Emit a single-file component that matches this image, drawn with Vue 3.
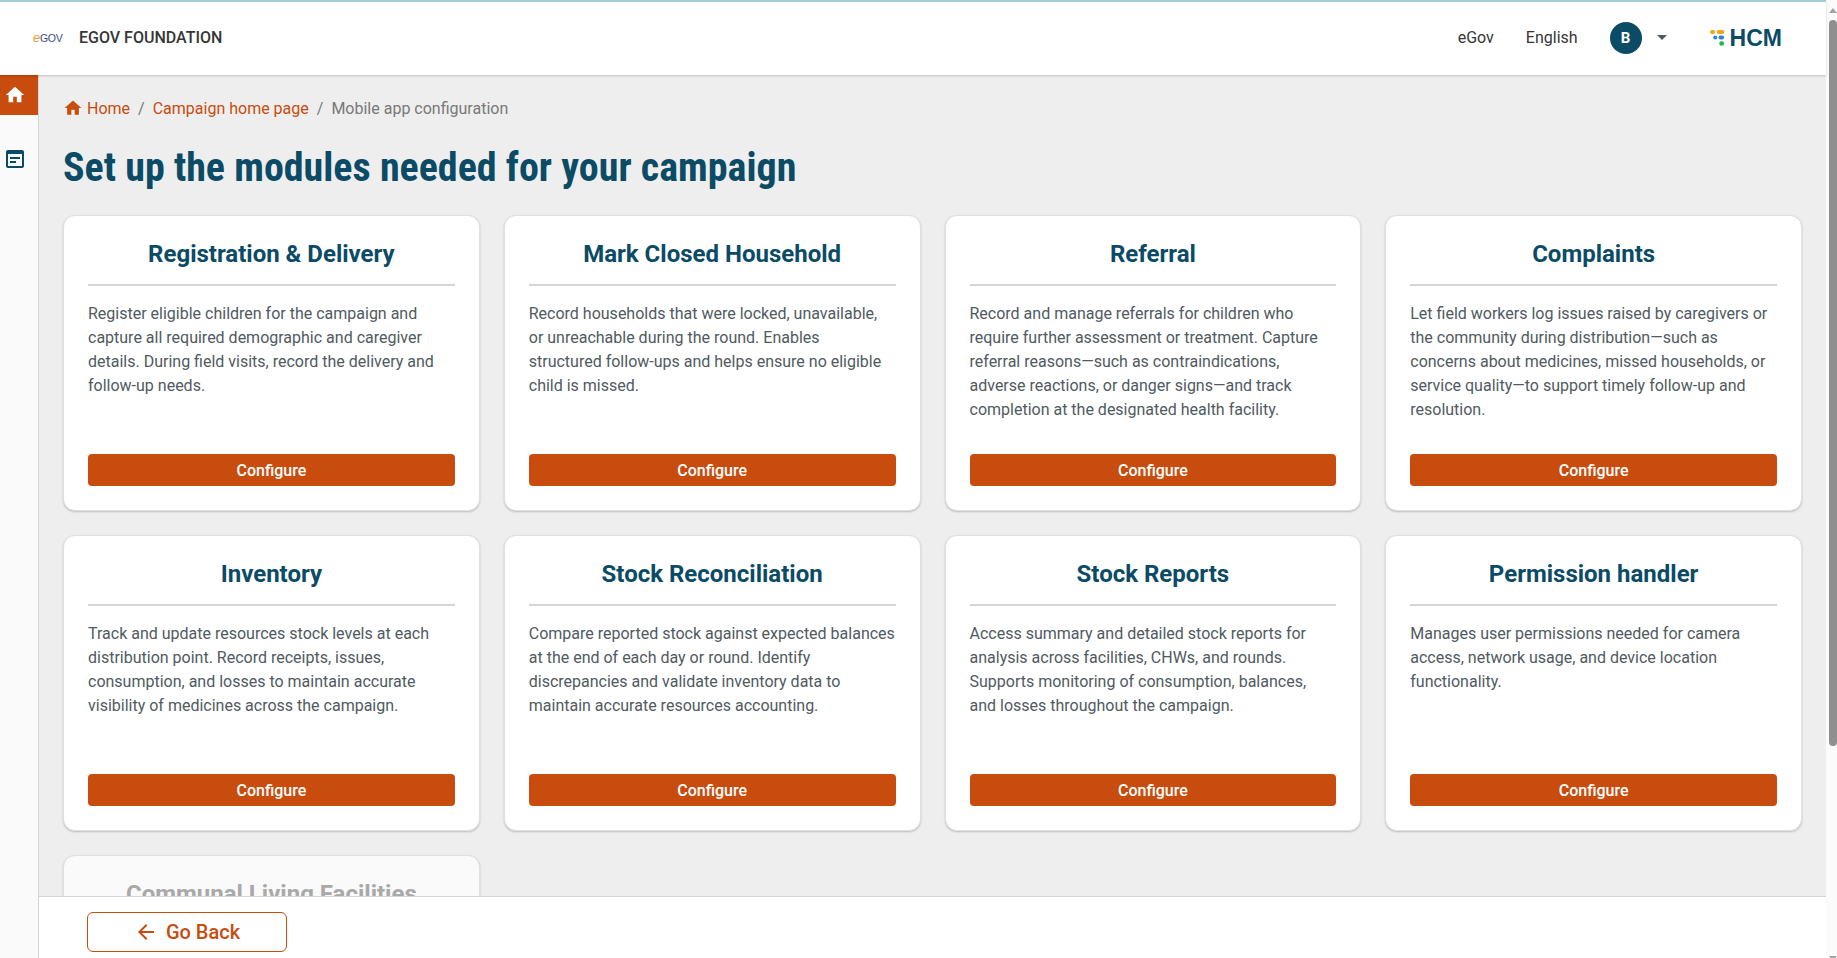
<script setup>
const cards = [
  { title: 'Registration & Delivery', text: 'Register eligible children for the campaign and capture all required demographic and caregiver details. During field visits, record the delivery and follow-up needs.' },
  { title: 'Mark Closed Household', text: 'Record households that were locked, unavailable, or unreachable during the round. Enables structured follow-ups and helps ensure no eligible child is missed.' },
  { title: 'Referral', text: 'Record and manage referrals for children who require further assessment or treatment. Capture referral reasons—such as contraindications, adverse reactions, or danger signs—and track completion at the designated health facility.' },
  { title: 'Complaints', text: 'Let field workers log issues raised by caregivers or the community during distribution—such as concerns about medicines, missed households, or service quality—to support timely follow-up and resolution.' },
  { title: 'Inventory', text: 'Track and update resources stock levels at each distribution point. Record receipts, issues, consumption, and losses to maintain accurate visibility of medicines across the campaign.' },
  { title: 'Stock Reconciliation', text: 'Compare reported stock against expected balances at the end of each day or round. Identify discrepancies and validate inventory data to maintain accurate resources accounting.' },
  { title: 'Stock Reports', text: 'Access summary and detailed stock reports for analysis across facilities, CHWs, and rounds. Supports monitoring of consumption, balances, and losses throughout the campaign.' },
  { title: 'Permission handler', text: 'Manages user permissions needed for camera access, network usage, and device location functionality.' },
  { title: 'Communal Living Facilities', faded: true }
]
</script>

<template>
  <div class="page">
    <div class="column">
      <header class="topbar">
        <div class="brand">
          <span class="egov-logo"><i>e</i>GOV</span>
          <span class="org">EGOV FOUNDATION</span>
        </div>
        <div class="actions">
          <span class="tenant">eGov</span>
          <span class="lang">English</span>
          <span class="avatar">B</span>
          <span class="caret"></span>
          <span class="hcm">
            <svg width="15" height="16" viewBox="0 0 15 16">
              <rect x="0" y="0" width="5" height="4" rx="2" fill="#f7a21b" />
              <rect x="6.7" y="0" width="7.6" height="4" rx="2" fill="#f7a21b" />
              <circle cx="5.2" cy="7.5" r="2" fill="#2f86d0" />
              <rect x="8.5" y="5.5" width="5.6" height="4" rx="2" fill="#2f86d0" />
              <rect x="9.3" y="11.3" width="4.8" height="4.4" rx="2.2" fill="#1fb84f" />
            </svg>
            <b>HCM</b>
          </span>
        </div>
      </header>
      <div class="body">
        <aside class="sidebar">
          <div class="side-item active">
            <svg width="22" height="22" viewBox="0 0 24 24" fill="#fff"><path d="M10 20v-6h4v6h5v-8h3L12 3 2 12h3v8z" /></svg>
          </div>
          <div class="side-item">
            <svg width="24" height="24" viewBox="0 0 24 24" fill="#0b4b66"><path d="M19 3H5c-1.1 0-2 .9-2 2v14c0 1.1.9 2 2 2h14c1.1 0 2-.9 2-2V5c0-1.1-.9-2-2-2zm0 16H5V7h14v12zm-2-7H7v-2h10v2zm-4 4H7v-2h6v2z" /></svg>
          </div>
        </aside>
        <main class="main">
          <nav class="crumbs">
            <svg width="20" height="20" viewBox="0 0 24 24" fill="#c84c0e"><path d="M10 20v-6h4v6h5v-8h3L12 3 2 12h3v8z" /></svg>
            <a class="home">Home</a>
            <span class="sep">/</span>
            <a>Campaign home page</a>
            <span class="sep">/</span>
            <span class="current">Mobile app configuration</span>
          </nav>
          <h1>Set up the modules needed for your campaign</h1>
          <section class="grid">
            <article v-for="c in cards" :key="c.title" class="card" :class="{ faded: c.faded }">
              <h2>{{ c.title }}</h2>
              <template v-if="c.text">
                <p>{{ c.text }}</p>
                <button class="configure">Configure</button>
              </template>
            </article>
          </section>
          <footer class="footer">
            <button class="back">
              <svg width="24" height="24" viewBox="0 0 24 24" fill="#c84c0e"><path d="M20 11H7.83l5.59-5.59L12 4l-8 8 8 8 1.41-1.41L7.83 13H20v-2z" /></svg>
              Go Back
            </button>
          </footer>
        </main>
      </div>
    </div>
    <div class="scrollbar">
      <span class="arrow up"></span>
      <span class="thumb"></span>
      <span class="arrow down"></span>
    </div>
  </div>
</template>

<style>
html, body { margin: 0; overflow: hidden; }
</style>

<style scoped>
.page {
  display: flex;
  height: 958px;
  overflow: hidden;
  font-family: Roboto, "Liberation Sans", sans-serif;
  background: #eee;
}
.column { flex: 1; min-width: 0; display: flex; flex-direction: column; }
.topbar {
  flex: none;
  height: 71px;
  background: #fff;
  border-top: 2px solid #a3ccd6;
  box-shadow: 0 1px 2px rgba(0, 0, 0, .2);
  display: flex;
  align-items: center;
  justify-content: space-between;
  padding: 0 44px 2px 33px;
  position: relative;
  z-index: 3;
}
.brand { display: flex; align-items: center; gap: 18px; }
.egov-logo { width: 28px; font-size: 10.5px; font-family: "Liberation Sans", sans-serif; color: #3b4a8a; letter-spacing: -.3px; white-space: nowrap; }
.egov-logo i { color: #f39a2c; font-size: 13px; font-style: italic; }
.org { font-weight: 500; font-size: 16px; color: #363636; }
.actions { display: flex; align-items: center; }
.tenant, .lang { font-size: 16px; color: #363636; }
.lang { margin-left: 32px; }
.avatar {
  width: 32px; height: 32px; border-radius: 50%;
  background: #0b4b66; color: #fff; font-weight: 700; font-size: 15px;
  display: flex; align-items: center; justify-content: center;
  margin-left: 32px;
}
.caret {
  width: 0; height: 0;
  border-left: 5px solid transparent; border-right: 5px solid transparent; border-top: 5px solid #505a5f;
  margin-left: 15px;
}
.hcm { display: flex; align-items: center; gap: 5px; margin-left: 43px; }
.hcm b { color: #0b4b66; font-size: 23px; line-height: 24px; font-family: "Liberation Sans", sans-serif; }
.body { flex: 1; min-height: 0; display: flex; }
.sidebar {
  width: 38px; flex: none;
  background: #fafafa;
  border-right: 1px solid #d6d5d4;
}
.side-item { height: 40px; display: flex; align-items: center; padding-left: 3px; margin-bottom: 24px; }
.side-item.active { background: #c84c0e; padding-left: 4px; }
.main { flex: 1; min-width: 0; position: relative; overflow: hidden; padding: 0 24px; }
.crumbs { display: flex; align-items: center; height: 24px; margin-top: 21px; font-size: 16px; }
.crumbs a { color: #c84c0e; }
.crumbs a.home { margin-left: 4px; }
.crumbs .sep { color: #787878; margin: 0 8px; }
.crumbs .current { color: #787878; }
h1 {
  margin: 24px 0 0;
  font-size: 40px;
  line-height: 48px;
  font-weight: 700;
  font-stretch: condensed;
  color: #0b4b66;
}
.grid {
  display: grid;
  grid-template-columns: repeat(4, 1fr);
  gap: 24px;
  margin-top: 23px;
}
.card {
  height: 296px;
  box-sizing: border-box;
  background: #fff;
  border: 1px solid #e0e0e0;
  border-radius: 12px;
  box-shadow: 0 1px 2px rgba(0, 0, 0, .2);
  padding: 24px;
  display: flex;
  flex-direction: column;
}
.card h2 {
  margin: 0;
  font-size: 24px;
  line-height: 28px;
  font-weight: 700;
  color: #0b4b66;
  text-align: center;
  padding-bottom: 16px;
  border-bottom: 2px solid #d6d5d4;
}
.card p {
  margin: 16px 0 0;
  flex: 1;
  font-size: 16px;
  line-height: 24px;
  color: #505a5f;
}
.configure {
  height: 32px;
  border: 0;
  border-radius: 4px;
  background: #c84c0e;
  color: #fff;
  font: 500 16px Roboto, sans-serif;
}
.faded { background: #fafafa; }
.faded h2 { color: #a9a9a9; }
.footer {
  position: absolute;
  left: 0; right: 0; bottom: 0;
  height: 62px;
  box-sizing: border-box;
  background: #fff;
  border-top: 1px solid #d6d5d4;
  padding: 15px 48px;
}
.back {
  width: 200px; height: 40px;
  box-sizing: border-box;
  background: #fff;
  border: 1px solid #c84c0e;
  border-radius: 6px;
  color: #c84c0e;
  font: 500 20px Roboto, sans-serif;
  display: flex; align-items: center; justify-content: center; gap: 8px;
}
.scrollbar { width: 11px; flex: none; background: #fbfbfb; position: relative; padding-top: 20px; box-sizing: border-box; }
.arrow {
  position: absolute; left: 3px;
  width: 0; height: 0;
  border-left: 4px solid transparent; border-right: 4px solid transparent;
}
.arrow.up { top: 8px; border-bottom: 5px solid #a3a3a3; }
.arrow.down { bottom: -3px; border-top: 5px solid #a3a3a3; }
.thumb { display: block; width: 8px; height: 726px; margin-left: 3px; border-radius: 4px; background: #8f8f8f; }
</style>
